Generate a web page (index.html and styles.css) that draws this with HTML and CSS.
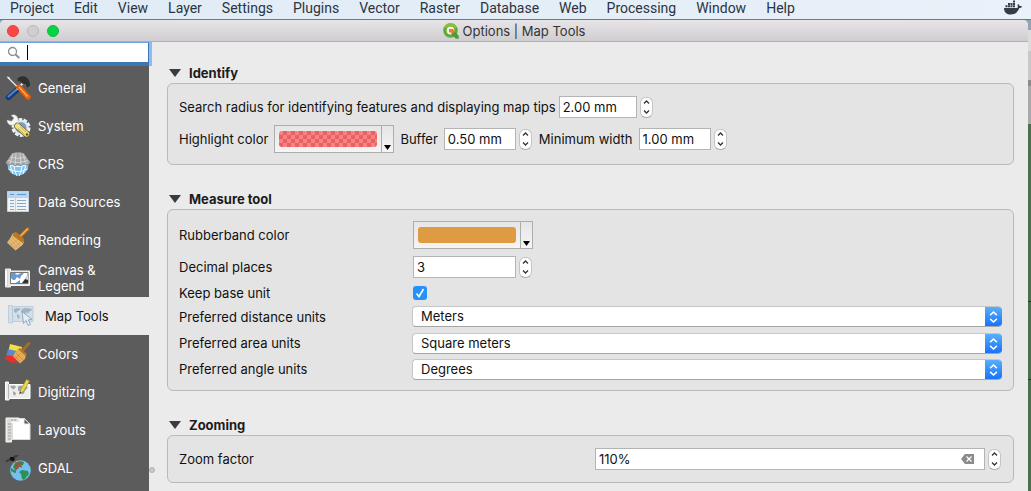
FILE: index.html
```html
<!DOCTYPE html>
<html lang="en">
<head>
<meta charset="utf-8">
<title>Options | Map Tools</title>
<link rel="stylesheet" href="styles.css">
</head>
<body>
<nav class="menubar">
  <a href="#">Project</a><a href="#">Edit</a><a href="#">View</a><a href="#">Layer</a><a href="#">Settings</a><a href="#">Plugins</a><a href="#">Vector</a><a href="#">Raster</a><a href="#">Database</a><a href="#">Web</a><a href="#">Processing</a><a href="#">Window</a><a href="#">Help</a>
  <svg class="whale" viewBox="0 0 18 15" aria-hidden="true"><path fill="#343c46" d="M0 8h13.300c.7-.8.7-2 .1-3l.9-.9c.8.5 1.200 1.200 1.300 2 .8-.1 1.600 0 2.400.4-.5 1-1.500 1.500-2.700 1.500C13.800 12.200 10.800 14.500 6.300 14.500 2.500 14.500 0 12.200 0 8Z"/><path fill="#343c46" d="M1.500 5.300h2v2h-2zM4 5.300h2v2H4zM6.500 5.300h2v2h-2zM9 5.300h2v2H9zM4 2.900h2v2H4zM6.500 2.900h2v2h-2zM9 2.900h2v2H9zM9 .5h2v2H9z"/></svg>
</nav>
<div class="desktop">
  <section class="window">
    <header class="titlebar">
      <div class="lights">
        <button class="light close" aria-label="Close"></button>
        <button class="light minimize" aria-label="Minimize" disabled></button>
        <button class="light zoom" aria-label="Zoom"></button>
      </div>
      <h1 class="title">
        <svg class="logo" viewBox="0 0 16 16" aria-hidden="true"><circle cx="7.500" cy="7.500" r="5.600" fill="#eef3e6" stroke="#63a83a" stroke-width="3.400"/><path d="M2.500 4.800A5.600 5.600 0 0 1 12.600 5" fill="none" stroke="#8bbd35" stroke-width="3"/><path d="M8.500 8.500h3.200l4 4.200v3h-2.800L8.500 11Z" fill="#4b9a3c"/><path d="M6 6h4l2.200 2.500-1.900 1.800L8 9.500 6 9.200Z" fill="#ee7d25"/></svg>
        Options | Map Tools
      </h1>
    </header>
    <div class="body">
      <aside class="sidebar">
        <label class="search">
          <svg viewBox="0 0 14 14" aria-hidden="true"><circle cx="5.500" cy="5.500" r="4" fill="none" stroke="#8c8c8c" stroke-width="1.300"/><path d="m8.500 8.500 3.800 3.500" stroke="#8c8c8c" stroke-width="1.800"/></svg>
          <span class="caret"></span>
          <input type="text" aria-label="Search options">
        </label>
        <nav class="pages">
          <a class="page" href="#"><svg viewBox="0 0 26 26"><path d="m2.500 2 11 11" stroke="#e2e2e2" stroke-width="1.500"/><path d="m2 1.500 2.500.7.500 2.500" fill="#eee"/><path d="m12.500 14.500-9 8" stroke="#183b73" stroke-width="5.400" stroke-linecap="round"/><path d="m11.500 14.500-8 7" stroke="#4c85c8" stroke-width="2" stroke-linecap="round"/><path d="m18 8-6 6.500" stroke="#ddd" stroke-width="2"/><path d="m14 12 9 10" stroke="#e75e0b" stroke-width="5.300" stroke-linecap="round"/><path d="m14 12 8.500 9.500" stroke="#ffab52" stroke-width="1.500"/><path d="M12.500 3.500c4-4 10-2.500 12 3l.6 4-3.200 2.200-1-3.500-3.400-.5-2.300-2.200-2.700-.8Z" fill="#2c302f"/></svg><span>General</span></a>
          <a class="page" href="#"><svg viewBox="0 0 26 26"><circle cx="16" cy="14.500" r="8" fill="#79a7d7" stroke="#f1f1ef" stroke-width="3" stroke-dasharray="3.600 1.400"/><circle cx="16" cy="14.500" r="6.500" fill="#77a2d2" stroke="#e4e7e9" stroke-width="2"/><path d="M6 2.500 9 5 6.500 8.200 2 7c0 4 3 6 7 5l2 2 4-4-2-2.500c.5-4-3-7-7-5Z" fill="#f5f5f4" stroke="#aaa" stroke-width=".5"/><path d="m12.500 13 9.500 8.500" stroke="#6e632e" stroke-width="6.800" stroke-linecap="round"/><path d="m12.500 13 9 8" stroke="#eee18a" stroke-width="5.200" stroke-linecap="round"/><path d="m13 15.500 6.500 6M15 13.500l6.500 6" stroke="#b39839" stroke-width=".7"/><circle cx="22" cy="21.500" r="1.200" fill="#565037"/></svg><span>System</span></a>
          <a class="page" href="#"><svg viewBox="0 0 26 26"><circle cx="13" cy="14" r="10.500" fill="#83c4ef"/><path d="M3 13q10 5 20 0M3.500 18q9.500 5 19 0M9 14q0 6 3 11M17 14q0 6-3 11M5 14l3 9M21 14l-3 9" fill="none" stroke="#f0faff"/><path d="M7 2.500q6-2.300 12 0l6.500 9.500-3.500 2.500-3-1.800-3 2-3-1.400-3 1.400-3-2-3 1.800L.5 12Z" fill="#a6a8aa"/><path d="M8 2.500 5 13M11 2 10 14M15 2l1 12M18 2.500l3 10.500M5 6q8 3 16 0M2.800 9.500q10 4 20.400 0" fill="none" stroke="#e1e2e3" stroke-width=".7"/><path d="M1 12l3 2.500 3-1.800 3 2 3-1.400 3 1.400 3-2 3 1.800 3-2.500" fill="none" stroke="#777d81" stroke-width=".7"/></svg><span>CRS</span></a>
          <a class="page" href="#"><svg viewBox="0 0 26 26"><path d="M2.500 2.500h21v20h-21z" fill="#f2f4f4" stroke="#bbd3e9"/><path d="M3 3h20v5H3z" fill="#b8d6f1"/><path d="M5 5.500h4M12 5.500h9" stroke="#6597c7"/><path d="M3 8.500h20M10.500 8v14" stroke="#c3d1dc"/><path d="M5 11.500h4M12 11.500h9M5 14.500h4M12 14.500h9M5 17.500h4M12 17.500h9M5 20.500h4M12 20.500h9" stroke="#86a8cd"/></svg><span>Data Sources</span></a>
          <a class="page" href="#"><svg viewBox="0 0 26 26"><path d="m15 10 8-8" stroke="#94621e" stroke-width="4" stroke-linecap="round"/><path d="m15 9.500 7.500-7.500" stroke="#eead4b" stroke-width="2" stroke-linecap="round"/><path d="m8 6 11 9-1.500 3-7 5.500L2 15.500l3-4Z" fill="#e8bb74"/><path d="m9 6 2-1.200 7.500 6.700.5 2.500-1.500 2L7.500 8.500Z" fill="#b97923"/><path d="m5 12 8 9M3.500 14l7.500 8.500M7 10l8 9M5.500 18.500 13 12M8.500 21l6.500-5.500" stroke="#c4924d" stroke-width=".6"/></svg><span>Rendering</span></a>
          <a class="page" href="#"><svg viewBox="0 0 26 26"><path d="M2.500 4h3v2h19v14.500h-19V22h-5V4Z" fill="#e5e5e2" stroke="#f4f4f2"/><path d="M.5 5h2v16h-2" fill="#fff" stroke="#bbb" stroke-width=".5"/><path d="M5.500 7.500h17.500v11H5.500z" fill="#fff" stroke="#777"/><path d="M6 8h4l2 2 4-2h3l-3 3-1 3-3-2-2 3H8l-2-2ZM12 17l3-2v3h-4Z" fill="#669bd1"/><path d="m23 10-6 8h6Z" fill="#303335"/><path d="m20 14 3-4v5Z" fill="#d9dcdd"/></svg><span>Canvas &amp; Legend</span></a>
          <a class="page current" href="#" aria-current="page"><svg viewBox="0 0 26 26"><path d="M.5 2.500h4v1h20.500v15H4.500V20h-4Z" fill="#d3e0ea" stroke="#bccddb"/><path d="M4.500 4v15" stroke="#b5c7d6"/><path d="m6 6 3-1 4 .5-2 2-2 1-1 2-2-2ZM9 11l3 2-1 3-2-2ZM14 6l3-1 6 .5 1 2-3 1-1 2.500-2-2-1 4-2-3-2-1Z" fill="#a3b4c1"/><path d="m14 8.500 1.500 12 2.500-3 2 5 2.500-1-2.200-4.700 3.700-.3Z" fill="#e6eef5" stroke="#819ab1" stroke-width=".8"/></svg><span>Map Tools</span></a>
          <a class="page" href="#"><svg viewBox="0 0 26 26"><path d="M5 3 17 6l-1 5-13 1Z" fill="#f4df43"/><path d="m3 8 13 3-2 6-13-1Z" fill="#5c8ac7"/><path d="m1 14 13 2-1 5-6 1-7-4Z" fill="#e4302f"/><path d="m18 9 6-6.500" stroke="#a56d26" stroke-width="3" stroke-linecap="round"/><path d="m13 8 8 6-1 4-5 4.500-7-7 2-4Z" fill="#e6aa59"/><path d="m13 8 2-1 7 6-1.500 2Z" fill="#b77725"/><path d="m11 12 7 7M9.500 15l6 6M10 18l5-5" stroke="#ba7b34" stroke-width=".6"/></svg><span>Colors</span></a>
          <a class="page" href="#"><svg viewBox="0 0 26 26"><path d="M.5 3h3v2.500H25v14H4V21H.5Z" fill="#ededea" stroke="#fff"/><path d="M3.500 5v15" stroke="#b6b6b5"/><path d="m5 7 5-.5 1 2-3 2-2-2ZM8 12l3 2-1 3-2-2ZM13 7l7-.500 3 2-3 3-1 3-2 1-2-3-2-1Z" fill="#9fa5a7"/><path d="m14.500 15 1-4 6-10.500 3 1.500-6 10.500Z" fill="#edd44b" stroke="#9a8735" stroke-width=".6"/><path d="m14.500 15 .5-2.500 1.500 1Z" fill="#333"/></svg><span>Digitizing</span></a>
          <a class="page" href="#"><svg viewBox="0 0 26 26"><path d="M6 1.500h13l6 5.500v15.500H6Z" fill="#fff" stroke="#d7d7d7"/><path d="M19 1.500V7h6Z" fill="#5b5b5b" stroke="#eee"/><path d="M1 1h13v4H6.500v20H1Z" fill="#deded9" stroke="#f8f8f6"/><path d="M3 7h3M3 10h3M3 13h3M3 16h3M3 19h3M3 22h3M7 2v2M10 2v2" stroke="#8d8f8c" stroke-width=".8"/><path d="M7 6v16" stroke="#bbb"/></svg><span>Layouts</span></a>
          <a class="page" href="#"><svg viewBox="0 0 26 26"><circle cx="15.500" cy="15.500" r="10.300" fill="#6ec3f0"/><path d="m10 8 5-2 4 1-1 3-3 1-2 3-3 1-2-3Z" fill="#4a7d45"/><path d="m17 15 6 1 1 3-5 6-2-1-1-5-2-2ZM6 13l5 3-1 2-4-2Z" fill="#2f8f56"/><path d="m8 5 9 7-5-1-2 7" fill="none" stroke="#c2453b"/><path d="m1 6.500 5-2.500M8 3l5-3" stroke="#3a3e42" stroke-width="2.500"/><path d="m5 2 3.500 0 1.500 2.500-2 2-3-1.500Z" fill="#111"/></svg><span>GDAL</span></a>
        </nav>
      </aside>
      <div class="splitter"><span></span></div>
      <main class="content">
        <section class="group">
          <h2><svg viewBox="0 0 12 8"><path d="M0 0h12L6 8Z"/></svg>Identify</h2>
          <div class="box identify">
            <div class="line snug">
              <label for="radius">Search radius for identifying features and displaying map tips</label>
              <input class="field radius" id="radius" type="text" value="2.00 mm">
              <span class="spin"><button aria-label="Increase radius"><svg viewBox="0 0 7 4"><path d="m1 3.500 2.500-2.500L6 3.500"/></svg></button><button aria-label="Decrease radius"><svg viewBox="0 0 7 4"><path d="m1 .5 2.500 2.500L6 .5"/></svg></button></span>
            </div>
            <div class="line">
              <label for="highlight">Highlight color</label>
              <button class="color" id="highlight"><span class="swatch red"></span><span class="drop"><svg viewBox="0 0 7 5"><path d="M0 0h7L3.500 5Z"/></svg></span></button>
              <label for="buffer">Buffer</label>
              <input class="field short" id="buffer" type="text" value="0.50 mm">
              <span class="spin"><button aria-label="Increase buffer"><svg viewBox="0 0 7 4"><path d="m1 3.500 2.500-2.500L6 3.500"/></svg></button><button aria-label="Decrease buffer"><svg viewBox="0 0 7 4"><path d="m1 .5 2.500 2.500L6 .5"/></svg></button></span>
              <label class="after" for="minwidth">Minimum width</label>
              <input class="field short" id="minwidth" type="text" value="1.00 mm">
              <span class="spin"><button aria-label="Increase minimum width"><svg viewBox="0 0 7 4"><path d="m1 3.500 2.500-2.500L6 3.500"/></svg></button><button aria-label="Decrease minimum width"><svg viewBox="0 0 7 4"><path d="m1 .5 2.500 2.500L6 .5"/></svg></button></span>
            </div>
          </div>
        </section>
        <section class="group">
          <h2><svg viewBox="0 0 12 8"><path d="M0 0h12L6 8Z"/></svg>Measure tool</h2>
          <div class="box measure">
            <label for="rubber">Rubberband color</label>
            <button class="color" id="rubber"><span class="swatch orange"></span><span class="drop"><svg viewBox="0 0 7 5"><path d="M0 0h7L3.500 5Z"/></svg></span></button>
            <label for="decimals">Decimal places</label>
            <div class="line tight">
              <input class="field decimals" id="decimals" type="text" value="3">
              <span class="spin"><button aria-label="Increase decimals"><svg viewBox="0 0 7 4"><path d="m1 3.500 2.500-2.500L6 3.500"/></svg></button><button aria-label="Decrease decimals"><svg viewBox="0 0 7 4"><path d="m1 .5 2.500 2.500L6 .5"/></svg></button></span>
            </div>
            <label for="keep">Keep base unit</label>
            <span class="check"><input id="keep" type="checkbox" checked><svg viewBox="0 0 14 14"><path d="m3.500 7.500 2.500 3 4.500-7.500"/></svg></span>
            <label for="distance">Preferred distance units</label>
            <span class="select"><select id="distance"><option>Meters</option></select><svg viewBox="0 0 17 21"><path d="m5 8.500 3.500-3.300L12 8.500M5 12.500l3.500 3.300 3.500-3.300"/></svg></span>
            <label for="area">Preferred area units</label>
            <span class="select"><select id="area"><option>Square meters</option></select><svg viewBox="0 0 17 21"><path d="m5 8.500 3.500-3.300L12 8.500M5 12.500l3.500 3.300 3.500-3.300"/></svg></span>
            <label for="angle">Preferred angle units</label>
            <span class="select"><select id="angle"><option>Degrees</option></select><svg viewBox="0 0 17 21"><path d="m5 8.500 3.500-3.300L12 8.500M5 12.500l3.500 3.300 3.500-3.300"/></svg></span>
          </div>
        </section>
        <section class="group">
          <h2><svg viewBox="0 0 12 8"><path d="M0 0h12L6 8Z"/></svg>Zooming</h2>
          <div class="box zooming">
            <label for="factor">Zoom factor</label>
            <div class="line">
              <span class="field clearable"><input id="factor" type="text" value="110%"><button aria-label="Clear"><svg viewBox="0 0 13 10"><path d="M4 0h9v10H4L0 5Z" fill="#8b8b8b"/><path d="m5.500 2.500 5 5m0-5-5 5" stroke="#fff" stroke-width="1.200"/></svg></button></span>
              <span class="spin"><button aria-label="Increase zoom"><svg viewBox="0 0 7 4"><path d="m1 3.500 2.500-2.500L6 3.500"/></svg></button><button aria-label="Decrease zoom"><svg viewBox="0 0 7 4"><path d="m1 .5 2.500 2.500L6 .5"/></svg></button></span>
            </div>
          </div>
        </section>
      </main>
    </div>
  </section>
  <div class="behind"></div>
</div>
</body>
</html>
```
FILE: styles.css
```css
* { box-sizing: border-box; }
body {
  margin: 0;
  height: 100vh;
  display: flex;
  flex-direction: column;
  overflow: hidden;
  font: 13px/16px Inter, "Liberation Sans", sans-serif;
  color: #111;
  background: #ebebeb;
}
button, input, select { font: inherit; color: inherit; margin: 0; padding: 0; border: 0; background: none; }
svg { display: block; flex: none; }
a { color: inherit; text-decoration: none; }

.menubar {
  flex: none;
  display: flex;
  align-items: center;
  gap: 20px;
  height: 20px;
  padding: 0 9px 4px 10px;
  font: 14px/16px Roboto, "Liberation Sans", sans-serif;
  color: #2b3440;
  background: linear-gradient(90deg, #dfebf6, #e9f1f9);
  border-bottom: 1px solid #647b98;
}
.whale { width: 18px; height: 15px; margin-left: auto; }

.desktop { flex: 1; min-height: 0; display: flex; background: #8fa3b5; }
.behind {
  width: 3px;
  background: linear-gradient(#8fa3b5 10px, #dcdcdc 10px 31px, #c8c8c8 31px 60px, #8b8b8b 60px 66px, #a9a9a9 66px 104px, #4c704c 104px 281px, #263826 281px 282px, #4c704c 282px 359px, #263826 359px 360px, #4c704c 360px);
}
.window {
  flex: 1;
  min-width: 0;
  display: flex;
  flex-direction: column;
  background: #ebebeb;
  border-radius: 5px 5px 0 0;
  overflow: hidden;
}
.titlebar {
  flex: none;
  display: grid;
  grid-template-columns: 1fr auto 1fr;
  align-items: center;
  height: 22px;
  background: linear-gradient(#e8e5e9, #d0cdd1);
  border-bottom: 1px solid #b1afb2;
}
.lights { display: flex; gap: 8px; padding-left: 7px; }
.light { width: 12px; height: 12px; border-radius: 50%; border: 1px solid #e33e3b; background: #fc4642; }
.minimize { background: #d0ced1; border-color: #b9b7ba; }
.zoom { background: #05d444; border-color: #0dbb3f; }
.title { display: flex; align-items: center; gap: 4px; margin: 0; font-size: 13px; font-weight: 400; color: #333; }
.logo { width: 16px; height: 16px; }

.body { flex: 1; min-height: 0; display: flex; }
.sidebar { flex: none; width: 149px; background: #5c5c5c; }
.search {
  display: flex;
  align-items: center;
  height: 24px;
  padding-left: 7px;
  background: #fff;
  border: solid #3e76b5;
  border-width: 1px 1px 4px 0;
  border-top-color: #6fa4e4;
  box-shadow: 3px 0 0 #8bbcf5;
}
.search svg { width: 14px; height: 14px; }
.caret { width: 1px; height: 15px; margin-left: 6px; background: #000; }
.search input { flex: 1; min-width: 0; outline: 0; }
.pages { padding-top: 3px; }
.page { display: flex; align-items: center; gap: 7px; height: 38px; padding: 0 26px 0 5px; color: #fff; }
.page svg { width: 26px; height: 26px; }
.page.current { gap: 11px; padding: 0 8px; color: #111; background: #ebebeb; }
.splitter { flex: none; width: 6px; display: flex; align-items: flex-end; padding-bottom: 18px; }
.splitter span { width: 6px; height: 6px; border-radius: 50%; background: #c8c8c8; border: 1px solid #b5b5b5; }

.content { flex: 1; min-width: 0; display: flex; flex-direction: column; gap: 24px; padding: 21px 14px 8px 12px; }
h2 { display: flex; align-items: center; gap: 8px; height: 20px; margin: 0; padding-left: 2px; font-size: 13px; line-height: 16px; font-weight: 700; color: #1c1c1c; }
h2 svg { width: 12px; height: 8px; fill: #3b3b3b; }
.box { border: 1px solid #b9b9b9; border-radius: 6px; background: #e4e4e4; padding: 11px; }
.identify { display: flex; flex-direction: column; gap: 7px; padding-top: 12px; }
.line { display: flex; align-items: center; gap: 3px; }
.line label { margin-right: 3px; white-space: nowrap; }
.snug label { margin-right: 0; }
.line .color { margin-right: 3px; }
.line .after { margin-left: 4px; }
.field { height: 22px; padding: 0 3px; background: #fff; border: 1px solid #b4b4b4; }
.radius { width: 78px; }
.short { width: 72px; }
.decimals { width: 103px; }

.spin {
  flex: none;
  display: flex;
  flex-direction: column;
  width: 13px;
  height: 21px;
  border-radius: 6px;
  background: #fff;
  border: 1px solid #c4c4c4;
  border-bottom-color: #a9a9a9;
}
.spin button { flex: 1; display: grid; place-items: center; }
.spin svg { width: 7px; height: 4px; fill: none; stroke: #333; stroke-width: 1.3; }

.color { flex: none; display: flex; width: 120px; height: 28px; border: 1px solid #adadad; background: linear-gradient(#e6e6e6, #f5f5f5); }
.swatch { flex: 1; margin: 5px 4px; border-radius: 3px; }
.red { background: repeating-conic-gradient(#e36464 0 25%, #ff8080 0 50%) 0 0 / 8px 8px; }
.orange { background: #df9b43; }
.drop { display: flex; align-items: flex-end; justify-content: center; width: 12px; padding-bottom: 2px; border-left: 1px solid #adadad; }
.drop svg { width: 7px; height: 5px; }

.measure {
  display: grid;
  grid-template-columns: 233px 1fr;
  grid-template-rows: 32px 32px 20px 27px 26px 26px;
  align-items: center;
  padding: 9px 11px 8px;
}
.measure .color { margin-left: 1px; }
.tight { padding-left: 1px; }
.check { display: grid; width: 14px; height: 14px; margin-left: 1px; }
.check input, .check svg { grid-area: 1 / 1; width: 14px; height: 14px; }
.check input { appearance: none; border-radius: 3px; background: #2591fc; }
.check svg { fill: none; stroke: #fff; stroke-width: 1.6; pointer-events: none; }
.select { display: grid; height: 21px; border-radius: 4px; overflow: hidden; background: #fff; border: 1px solid #c6c6c6; border-bottom-color: #a6a6a6; border-right: 0; }
.select select, .select svg { grid-area: 1 / 1; }
.select select { appearance: none; width: 100%; padding: 0 25px 2px 8px; }
.select svg { justify-self: end; width: 17px; height: 20px; fill: none; stroke: #fff; stroke-width: 1.6; background: linear-gradient(#5aaefa, #1371fb); pointer-events: none; }

.zooming { display: grid; grid-template-columns: 1fr 1fr; gap: 10px; align-items: center; padding: 12px 12px 12px 11px; }
.clearable { flex: 1; min-width: 0; display: flex; align-items: center; padding-right: 10px; }
.clearable input { flex: 1; min-width: 0; outline: 0; }
.clearable svg { width: 13px; height: 10px; }
```
